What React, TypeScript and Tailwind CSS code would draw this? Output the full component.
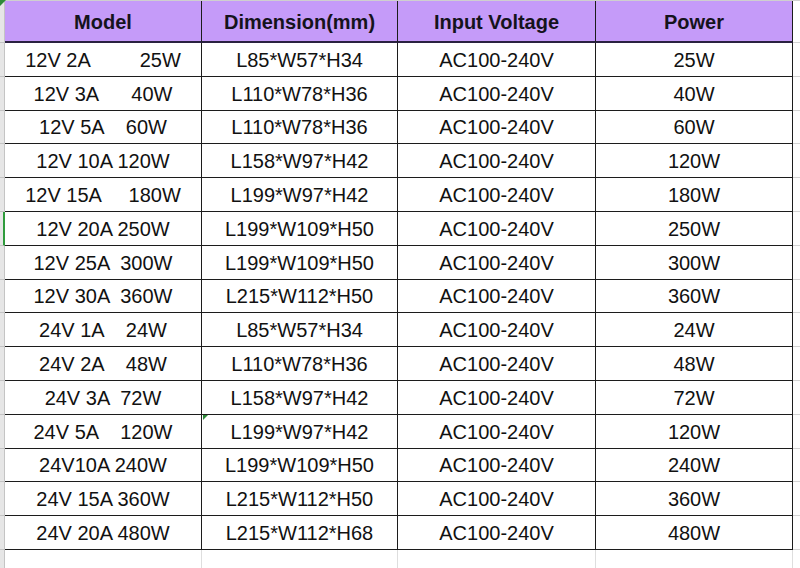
const rows = [
  ["12V 2A         25W", "L85*W57*H34", "AC100-240V", "25W"],
  ["12V 3A      40W", "L110*W78*H36", "AC100-240V", "40W"],
  ["12V 5A    60W", "L110*W78*H36", "AC100-240V", "60W"],
  ["12V 10A 120W", "L158*W97*H42", "AC100-240V", "120W"],
  ["12V 15A     180W", "L199*W97*H42", "AC100-240V", "180W"],
  ["12V 20A 250W", "L199*W109*H50", "AC100-240V", "250W"],
  ["12V 25A  300W", "L199*W109*H50", "AC100-240V", "300W"],
  ["12V 30A  360W", "L215*W112*H50", "AC100-240V", "360W"],
  ["24V 1A    24W", "L85*W57*H34", "AC100-240V", "24W"],
  ["24V 2A    48W", "L110*W78*H36", "AC100-240V", "48W"],
  ["24V 3A  72W", "L158*W97*H42", "AC100-240V", "72W"],
  ["24V 5A    120W", "L199*W97*H42", "AC100-240V", "120W"],
  ["24V10A 240W", "L199*W109*H50", "AC100-240V", "240W"],
  ["24V 15A 360W", "L215*W112*H50", "AC100-240V", "360W"],
  ["24V 20A 480W", "L215*W112*H68", "AC100-240V", "480W"],
];

const headers = ["Model", "Dimension(mm)", "Input Voltage", "Power"];

const cols = "grid grid-cols-[5px_197px_196px_198px_197px_1fr]";

const App = () => {
  return (
    <div className="relative w-[800px] h-[568px] overflow-hidden bg-white text-[#111111] font-['Liberation_Sans',Arial,sans-serif]">
      {/* header */}
      <div className={`${cols} h-[43px] border-t border-[#cfcfcf]`}>
        <div className="bg-[#e6e6e6] border-r border-[#c4c4c4] border-b border-b-[#c4c4c4]" />
        {headers.map((h) => (
          <div
            key={h}
            className="flex items-center justify-center pt-[2px] bg-[#c59bf9] border-r border-[#1c1c1c] border-b-2 border-b-[#2a2140] text-[20px] font-bold text-[#15131c]"
          >
            {h}
          </div>
        ))}
        <div className="border-b border-[#d4d4d4]" />
      </div>

      {/* body */}
      {rows.map((r, i) => (
        <div key={i} className={`${cols} h-[33.8px]`}>
          <div
            className={`bg-[#e6e6e6] border-b border-[#c4c4c4] ${
              i === 5 ? "border-r-2 border-r-[#2f9b3c]" : "border-r border-r-[#c4c4c4]"
            }`}
          />
          {r.map((c, j) => (
            <div
              key={j}
              className="flex items-center justify-center pt-[1px] whitespace-pre border-r border-b border-[#1c1c1c] text-[20px]"
            >
              {c}
            </div>
          ))}
          <div className="border-b border-[#d4d4d4]" />
        </div>
      ))}

      {/* empty spreadsheet row below */}
      <div className={`${cols} h-[18px]`}>
        <div className="bg-[#e6e6e6] border-r border-[#c4c4c4]" />
        <div className="border-r border-[#dedede]" />
        <div className="border-r border-[#dedede]" />
        <div className="border-r border-[#dedede]" />
        <div className="border-r border-[#dedede]" />
        <div />
      </div>

      {/* comment markers */}
      <div className="absolute left-0 top-0 w-0 h-0 border-t-[6px] border-t-[#2f8a3a] border-r-[6px] border-r-transparent" />
      <div className="absolute left-[203px] top-[415px] w-0 h-0 border-t-[5px] border-t-[#2f8a3a] border-r-[5px] border-r-transparent" />
    </div>
  );
};

export default App;
